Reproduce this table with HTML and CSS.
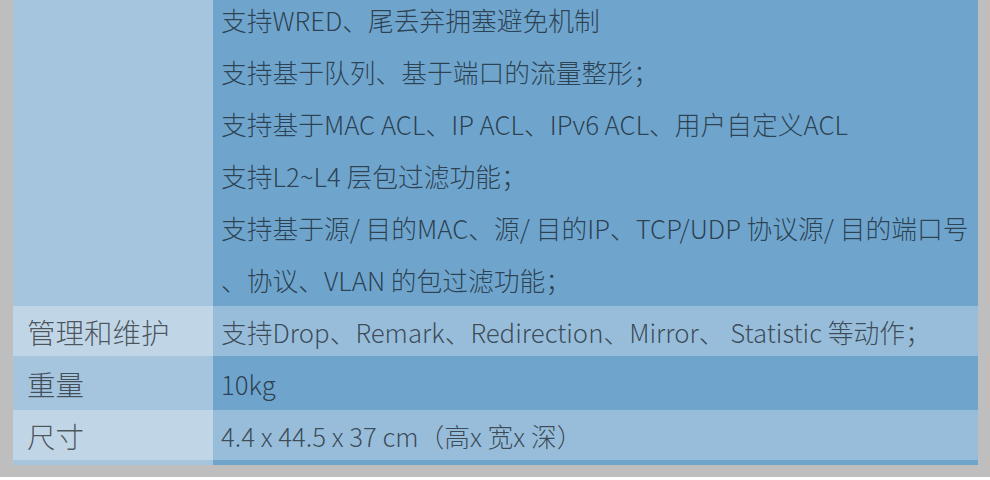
FILE: index.html
```html
<!DOCTYPE html>
<html lang="zh-CN">
<head>
<meta charset="utf-8">
<link rel="stylesheet" href="styles.css">
</head>
<body>
<div class="page">
  <div class="spec">
    <div class="row alt">
      <div class="label"></div>
      <div class="value lines">
        <div>支持WRED、尾丢弃拥塞避免机制</div>
        <div>支持基于队列、基于端口的流量整形；</div>
        <div>支持基于MAC ACL、IP ACL、IPv6 ACL、用户自定义ACL</div>
        <div>支持L2~L4 层包过滤功能；</div>
        <div>支持基于源/ 目的MAC、源/ 目的IP、TCP/UDP 协议源/ 目的端口号</div>
        <div>、协议、VLAN 的包过滤功能；</div>
      </div>
    </div>
    <div class="row light r-mgmt">
      <div class="label">管理和维护</div>
      <div class="value">支持Drop、Remark、Redirection、Mirror、 Statistic 等动作；</div>
    </div>
    <div class="row alt r-weight">
      <div class="label">重量</div>
      <div class="value">10kg</div>
    </div>
    <div class="row light r-size">
      <div class="label">尺寸</div>
      <div class="value">4.4 x 44.5 x 37 cm（高x 宽x 深）</div>
    </div>
    <div class="row alt r-next">
      <div class="label"></div>
      <div class="value"></div>
    </div>
  </div>
</div>
</body>
</html>
```
FILE: styles.css
```css
html, body {
  margin: 0;
  padding: 0;
  background: #ffffff;
}
body {
  font-family: "Noto Sans CJK SC", "Noto Sans", sans-serif;
  color: rgba(0, 0, 0, 0.62);
}
.page {
  background: #bebebe;
  height: 477px;
  padding: 0 12px 0 13px;
  box-sizing: border-box;
  overflow: hidden;
}
.spec {
  margin-top: -6px;
}
.row {
  display: grid;
  grid-template-columns: 200px 1fr;
}
.label {
  padding-left: 14px;
  font-size: 28.5px;
  font-weight: 300;
  display: flex;
  align-items: center;
}
.value {
  padding-left: 8px;
  font-size: 25.75px;
  font-weight: 300;
  display: flex;
  align-items: center;
  white-space: nowrap;
}
.value.lines {
  display: block;
  line-height: 52px;
}
.alt .label { background: #a5c4dd; }
.alt .value { background: #6fa4cc; }
.light .label { background: #c0d6e7; }
.light .value { background: #98bdda; }
.r-mgmt { height: 50px; }
.r-weight { height: 54px; }
.r-size { height: 50px; }
.r-next { height: 5px; }
```
